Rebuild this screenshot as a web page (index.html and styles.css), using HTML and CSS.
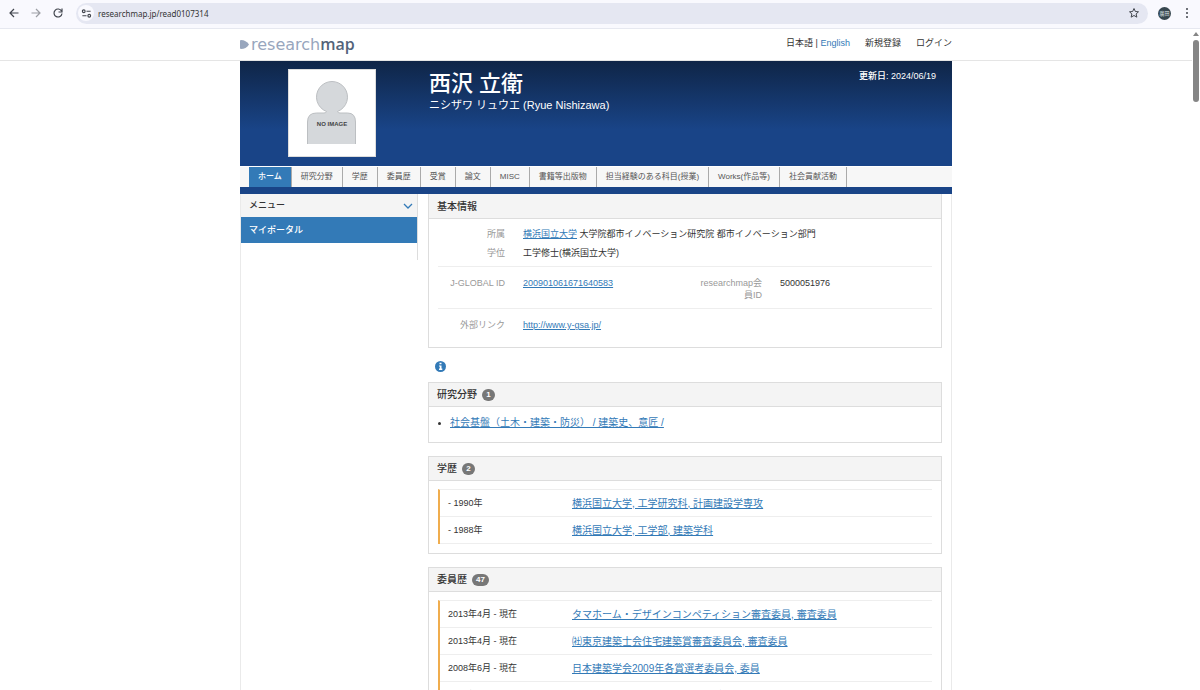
FILE: index.html
```html
<!DOCTYPE html>
<html lang="ja">
<head>
<meta charset="utf-8">
<title>西沢 立衛 - researchmap</title>
<link rel="stylesheet" href="styles.css">
</head>
<body>
<div class="browser">
  <div class="browser-nav">
    <button class="icon-btn" aria-label="戻る"><svg width="12" height="12" viewBox="0 0 24 24"><path d="M21 12H5M12 4l-8 8 8 8"/></svg></button>
    <button class="icon-btn dim" aria-label="進む"><svg width="12" height="12" viewBox="0 0 24 24"><path d="M3 12h16M12 4l8 8-8 8"/></svg></button>
    <button class="icon-btn" aria-label="再読み込み"><svg width="12" height="12" viewBox="0 0 24 24"><path d="M19 8a8 8 0 1 0 1 5M20 3v7h-7"/></svg></button>
  </div>
  <div class="address">
    <button class="site-info" aria-label="サイト情報"><svg width="11" height="11" viewBox="0 0 24 24"><circle cx="6" cy="7" r="3"/><path d="M12 7h9M3 17h9"/><circle cx="18" cy="17" r="3"/></svg></button>
    <input class="url" type="text" aria-label="アドレス" value="researchmap.jp/read0107314">
    <button class="icon-btn" aria-label="ブックマーク"><svg width="12" height="12" viewBox="0 0 24 24"><path class="thin" d="M12 3l2.700 6 6.300.600-4.800 4.300 1.500 6.400L12 17l-5.700 3.300 1.500-6.400L3 9.600l6.300-.600z"/></svg></button>
  </div>
  <button class="avatar" aria-label="プロフィール">廣田</button>
  <button class="icon-btn" aria-label="メニュー"><svg width="12" height="12" viewBox="0 0 24 24"><g class="dots"><circle cx="12" cy="4" r="2"/><circle cx="12" cy="12" r="2"/><circle cx="12" cy="20" r="2"/></g></svg></button>
</div>
<div class="viewport">
  <div class="page">
    <header class="site-header">
      <div class="container header-row">
        <a class="logo" href="#"><svg width="9" height="9" viewBox="0 0 9 9"><path d="M1 0Q0 0 0 1v7q0 1 1 1 5 0 8-4.500Q6 0 1 0z"/></svg><span>research<b>map</b></span></a>
        <nav class="links"><span>日本語 | <a class="lang" href="#">English</a></span><a href="#">新規登録</a><a href="#">ログイン</a></nav>
      </div>
    </header>
    <div class="container content">
      <section class="profile">
        <div class="photo">
          <svg width="52" height="64" viewBox="0 0 52 64" role="img" aria-label="NO IMAGE">
            <path class="figure" d="M1.500 63V41q0-9 9-9H18q2 0 2.500-1.500a15.500 15.500 0 1 1 11 0Q32 32 34 32h7.500q8 0 8 9v22"/>
            <text x="26" y="45" text-anchor="middle">NO IMAGE</text>
          </svg>
        </div>
        <div class="who"><h1>西沢 立衛</h1><p>ニシザワ リュウエ (Ryue Nishizawa)</p></div>
        <div class="updated">更新日: 2024/06/19</div>
      </section>
      <nav class="tabs">
        <a class="active" href="#">ホーム</a><a href="#">研究分野</a><a href="#">学歴</a><a href="#">委員歴</a><a href="#">受賞</a><a href="#">論文</a><a href="#">MISC</a><a href="#">書籍等出版物</a><a href="#">担当経験のある科目(授業)</a><a href="#">Works(作品等)</a><a href="#">社会貢献活動</a>
      </nav>
      <div class="columns">
        <aside class="side">
          <button class="menu-toggle">メニュー<svg width="10" height="6" viewBox="0 0 10 6"><path d="M1 1l4 4 4-4"/></svg></button>
          <a class="portal" href="#">マイポータル</a>
        </aside>
        <main class="main">
          <section class="panel first">
            <h2>基本情報</h2>
            <div class="panel-body info">
              <dl class="pair"><dt>所属</dt><dd><a href="#">横浜国立大学</a> 大学院都市イノベーション研究院 都市イノベーション部門</dd></dl>
              <dl class="pair"><dt>学位</dt><dd>工学修士(横浜国立大学)</dd></dl>
              <div class="split ruled">
                <dl class="pair"><dt>J-GLOBAL ID</dt><dd><a href="#">200901061671640583</a></dd></dl>
                <dl class="pair"><dt>researchmap会員ID</dt><dd>5000051976</dd></dl>
              </div>
              <dl class="pair ruled"><dt>外部リンク</dt><dd><a href="#">http://www.y-gsa.jp/</a></dd></dl>
            </div>
          </section>
          <button class="info-btn" aria-label="情報"><svg width="11" height="11" viewBox="0 0 11 11"><circle cx="5.500" cy="5.500" r="5.500"/><path d="M4.500 1.700h2v1.600h-2zM4 4.400h2.500v3.200H7.300v1.300H4V7.600h.8V5.600H4z"/></svg></button>
          <section class="panel">
            <h2>研究分野 <span class="badge">1</span></h2>
            <ul class="panel-body fields"><li><a href="#">社会基盤（土木・建築・防災） / 建築史、意匠 /</a></li></ul>
          </section>
          <section class="panel">
            <h2>学歴 <span class="badge">2</span></h2>
            <div class="panel-body entries"><ul class="history">
              <li><span>- 1990年</span><a href="#">横浜国立大学, 工学研究科, 計画建設学専攻</a></li>
              <li><span>- 1988年</span><a href="#">横浜国立大学, 工学部, 建築学科</a></li>
            </ul></div>
          </section>
          <section class="panel">
            <h2>委員歴 <span class="badge">47</span></h2>
            <div class="panel-body entries"><ul class="history">
              <li><span>2013年4月 - 現在</span><a href="#">タマホーム・デザインコンペティション審査委員, 審査委員</a></li>
              <li><span>2013年4月 - 現在</span><a href="#">㈳東京建築士会住宅建築賞審査委員会, 審査委員</a></li>
              <li><span>2008年6月 - 現在</span><a href="#">日本建築学会2009年各賞選考委員会, 委員</a></li>
              <li><span>2008年6月 - 現在</span><a href="#">エス・バイ・エル住宅設計アイデア 論文審査会委員会, 審査委員</a></li>
            </ul></div>
          </section>
        </main>
      </div>
    </div>
  </div>
  <div class="scrollbar" aria-hidden="true"><i class="up"></i><i class="thumb"></i></div>
</div>
</body>
</html>
```
FILE: styles.css
```css
* { box-sizing: border-box; }
html, body { height: 100%; }
body {
  margin: 0;
  overflow: hidden;
  display: flex;
  flex-direction: column;
  background: #fff;
  color: #333;
  font: 9px/13px "Liberation Sans", "Noto Sans CJK JP", sans-serif;
}
h1, h2, p, ul, dl, dd { margin: 0; padding: 0; }
button, input { font: inherit; color: inherit; border: 0; padding: 0; background: none; }
a { color: #337ab7; }
svg { display: block; }

/* Browser toolbar */
.browser {
  flex: none;
  display: flex;
  align-items: center;
  height: 29px;
  padding: 0 7px 2px 8px;
  background: #f9f9fe;
  border-bottom: 1px solid #e6e8f0;
}
.browser-nav { display: flex; gap: 10px; margin-right: 12px; }
.icon-btn svg, .site-info svg { fill: none; stroke: #41454d; stroke-width: 2.4; }
.icon-btn .thin { stroke-width: 2; }
.icon-btn .dots { fill: #41454d; stroke: none; }
.dim { opacity: .5; }
.address {
  flex: 1;
  display: flex;
  align-items: center;
  height: 21px;
  padding: 0 8px 0 2px;
  background: #e5e7f2;
  border-radius: 11px;
}
.site-info {
  display: grid;
  place-items: center;
  width: 16px;
  height: 16px;
  border-radius: 50%;
  background: #f9f9fe;
}
.url {
  flex: 1;
  margin-left: 4px;
  font: 8px/13px "Noto Sans", sans-serif;
}
.avatar {
  width: 13px;
  height: 13px;
  margin: 0 10px;
  border-radius: 50%;
  background: #37474f;
  color: #dde3e6;
  font-size: 5px;
  line-height: 13px;
}

/* Page frame */
.viewport { flex: 1; min-height: 0; display: flex; }
.page { flex: 1; min-width: 0; overflow: hidden; }
.container { max-width: 712px; margin: 0 auto; }
.scrollbar {
  flex: none;
  display: flex;
  flex-direction: column;
  align-items: center;
  gap: 4px;
  width: 8px;
  padding-top: 3px;
}
.up { border: 3px solid transparent; border-top: 0; border-bottom: 4px solid #858585; }
.thumb { width: 6px; height: 62px; border-radius: 3px; background: #858585; }

/* Site header */
.site-header { border-bottom: 1px solid #e5e5e5; }
.header-row { display: flex; justify-content: space-between; align-items: center; height: 31px; }
.logo {
  display: flex;
  align-items: center;
  gap: 2px;
  color: #98a6bd;
  font: 16px/18px "DejaVu Sans", sans-serif;
  text-decoration: none;
}
.logo svg { fill: #98a6bd; }
.logo b { color: #53637a; font-family: "Open Sans", sans-serif; font-weight: 600; }
.links { display: flex; gap: 15px; padding-bottom: 2px; }
.links a { color: #333; text-decoration: none; }
.links .lang { color: #337ab7; }

/* Profile banner */
.profile {
  display: flex;
  height: 105px;
  padding: 8px 16px 0 48px;
  color: #fff;
  background: linear-gradient(#0f2547, #194487 65%);
}
.photo {
  display: grid;
  place-items: center;
  width: 88px;
  height: 88px;
  margin-right: 53px;
  background: #fff;
  border: 1px solid #ddd;
}
.figure { fill: #d5d8db; stroke: #bcbfc2; }
.photo text { font: bold 6px "Liberation Sans", sans-serif; fill: #444; }
.who { flex: 1; }
.who h1 { font-size: 22px; line-height: 30px; font-weight: 500; }
.who p { font-size: 11px; line-height: 13px; }
.updated { line-height: 15px; font-weight: 500; }

/* Tabs */
.tabs {
  display: flex;
  padding-left: 9px;
  border-top: 1px solid #fff;
  border-bottom: 7px solid #194487;
  background: #f7f7f7;
}
.tabs a {
  padding: 0 9px;
  border-right: 1px solid #aaa;
  color: #555;
  font-size: 8px;
  line-height: 20px;
  text-decoration: none;
}
.tabs .active { background: #337ab7; color: #fff; font-weight: 500; }

/* Columns */
.columns { display: flex; gap: 10px; padding-right: 9px; border: solid #eaeaea; border-width: 0 1px; }
.side {
  flex: none;
  align-self: flex-start;
  width: 177px;
  padding-bottom: 17px;
  border-right: 1px solid #ddd;
}
.menu-toggle {
  display: flex;
  justify-content: space-between;
  align-items: center;
  width: 100%;
  height: 23px;
  padding: 0 4px 0 8px;
  background: #f4f4f4;
  font-weight: 500;
}
.menu-toggle svg { fill: none; stroke: #337ab7; stroke-width: 1.3; }
.portal {
  display: block;
  padding: 0 8px;
  background: #337ab7;
  color: #fff;
  line-height: 26px;
  font-weight: 500;
  text-decoration: none;
}
.main { flex: 1; min-width: 0; }
.panel { margin-bottom: 13px; border: 1px solid #ddd; }
.panel.first { border-top: 0; }
.panel h2 {
  display: flex;
  align-items: center;
  gap: 5px;
  height: 24px;
  padding: 0 8px;
  background: #f4f4f4;
  border-bottom: 1px solid #ddd;
  font-size: 10px;
  font-weight: 500;
}
.panel.first h2 { height: 25px; }
.badge {
  min-width: 13px;
  padding: 0 4px;
  border-radius: 6px;
  background: #777;
  color: #fff;
  font-size: 8px;
  line-height: 12px;
  font-weight: bold;
  text-align: center;
}
.panel-body { padding: 9px; }
.pair { display: grid; grid-template-columns: 67px 1fr; gap: 18px; }
.pair + .pair { margin-top: 6px; }
.pair dt { color: #999; text-align: right; }
.info { padding-bottom: 15px; }
.ruled { margin-top: 6px; padding-top: 10px; border-top: 1px solid #eee; }
.split { display: grid; grid-template-columns: 257px 1fr; line-height: 12px; }
.split .pair { margin-top: 0; }
.split + .ruled { margin-top: 7px; }
.info-btn { display: block; margin: 0 0 10px 7px; }
.info-btn circle { fill: #337ab7; }
.info-btn path { fill: #fff; }
.fields { padding-left: 21px; padding-bottom: 12px; }
.fields a, .history a { font-size: 10px; }
.entries { padding-top: 8px; }
.history { list-style: none; border-left: 2px solid #f0ad4e; border-top: 1px solid #eee; }
.history li {
  display: grid;
  grid-template-columns: 124px 1fr;
  align-items: center;
  height: 27px;
  padding-left: 8px;
  border-bottom: 1px solid #eee;
}
```
